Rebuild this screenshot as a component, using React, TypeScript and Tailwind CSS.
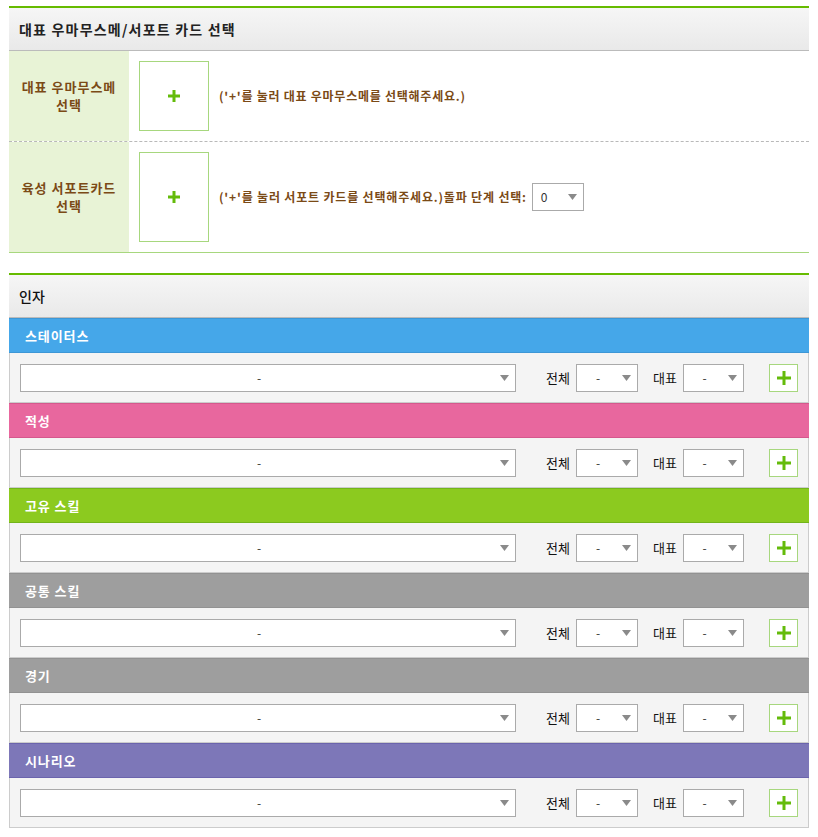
import React from 'react';

const font = { fontFamily: '"Noto Sans CJK KR", "Noto Sans", sans-serif' };

const factors = [
  { name: '스테이터스', bar: 'bg-[#45a7e9] border-[#3d97d6]' },
  { name: '적성', bar: 'bg-[#e8679e] border-[#d5588d]' },
  { name: '고유 스킬', bar: 'bg-[#8cca1f] border-[#72b51a]' },
  { name: '공통 스킬', bar: 'bg-[#9e9e9e] border-[#929292]' },
  { name: '경기', bar: 'bg-[#9e9e9e] border-[#929292]' },
  { name: '시나리오', bar: 'bg-[#7d77b8] border-[#6b64ad]' },
];

const Plus = ({ size = 12, thick = 3 }: { size?: number; thick?: number }) => (
  <svg width={size} height={size} viewBox={`0 0 ${size} ${size}`}>
    <rect x={(size - thick) / 2} y={0} width={thick} height={size} fill="#64bb0b" />
    <rect x={0} y={(size - thick) / 2} width={size} height={thick} fill="#64bb0b" />
  </svg>
);

const Arrow = () => (
  <svg width="9" height="6" viewBox="0 0 9 6">
    <path d="M0 0 L9 0 L4.5 6 Z" fill="#8a8a8a" />
  </svg>
);

const Select = ({ className, value, center = true }: { className: string; value: string; center?: boolean }) => (
  <div className={`relative flex h-[28px] shrink-0 items-center border border-[#aaaaaa] bg-white text-[12px] text-[#333] ${className}`}>
    <span className={center ? 'flex-1 pr-[18px] text-center' : 'pl-[8px]'}>{value}</span>
    <span className="absolute right-[6px] top-[10px] flex">
      <Arrow />
    </span>
  </div>
);

const PickBox = ({ h }: { h: string }) => (
  <div className={`flex w-[70px] ${h} shrink-0 items-center justify-center border border-[#a7d77e] bg-white`}>
    <Plus size={12} thick={3} />
  </div>
);

export default function App() {
  return (
    <div className="min-h-[837px] bg-white pt-[6px]" style={font}>
      {/* 대표 우마무스메 / 서포트 카드 */}
      <div className="ml-[9px] w-[800px] border-t-2 border-b border-t-[#66bb00] border-b-[#a7d77e]">
        <div className="flex h-[43px] items-center border-b border-[#bbbbbb] bg-gradient-to-b from-[#f6f6f6] to-[#e9e9e9] pl-[10px] text-[14px] font-bold tracking-[1.2px] text-[#222]">
          대표 우마무스메/서포트 카드 선택
        </div>
        <div className="flex h-[91px] border-b border-dashed border-[#b9b9b9]">
          <div className="flex w-[120px] items-center justify-center bg-[#e8f3d6] text-center text-[13px] font-bold leading-[18px] tracking-[1px] text-[#7b4a16]">
            대표 우마무스메
            <br />
            선택
          </div>
          <div className="flex items-center pl-[10px]">
            <PickBox h="h-[70px]" />
            <span className="ml-[10px] whitespace-nowrap text-[12px] font-bold tracking-[0.75px] text-[#7b4a16]">('+'를 눌러 대표 우마무스메를 선택해주세요.)</span>
          </div>
        </div>
        <div className="flex h-[110px]">
          <div className="flex w-[120px] items-center justify-center bg-[#e8f3d6] text-center text-[13px] font-bold leading-[18px] tracking-[1px] text-[#7b4a16]">
            육성 서포트카드
            <br />
            선택
          </div>
          <div className="flex items-center pl-[10px]">
            <PickBox h="h-[90px]" />
            <span className="ml-[10px] whitespace-nowrap text-[12px] font-bold tracking-[0.82px] text-[#7b4a16]">('+'를 눌러 서포트 카드를 선택해주세요.)돌파 단계 선택:</span>
            <Select className="ml-[5px] w-[52px]" value="0" center={false} />
          </div>
        </div>
      </div>

      {/* 인자 */}
      <div className="ml-[9px] mt-[20px] w-[800px] border-t-2 border-t-[#66bb00]">
        <div className="flex h-[43px] items-center border-b border-[#bbbbbb] bg-gradient-to-b from-[#f6f6f6] to-[#e9e9e9] pl-[10px] text-[14px] font-medium text-[#111]">
          인자
        </div>
        {factors.map((f) => (
          <div key={f.name}>
            <div className={`flex h-[35px] items-center border-y pl-[16px] text-[13px] font-bold tracking-[0.9px] text-white ${f.bar}`}>
              {f.name}
            </div>
            <div className="flex h-[50px] items-center border-x border-b border-[#cccccc] bg-[#f4f4f4] pl-[10px]">
              <Select className="w-[496px]" value="-" />
              <span className="ml-[30px] w-[30px] shrink-0 text-[13px] text-[#111]">전체</span>
              <Select className="w-[62px]" value="-" />
              <span className="ml-[15px] w-[30px] shrink-0 text-[13px] text-[#111]">대표</span>
              <Select className="w-[61px]" value="-" />
              <div className="ml-[25px] flex h-[28px] w-[29px] shrink-0 items-center justify-center border border-[#a7d77e] bg-white">
                <Plus size={14} thick={3} />
              </div>
            </div>
          </div>
        ))}
      </div>
    </div>
  );
}
